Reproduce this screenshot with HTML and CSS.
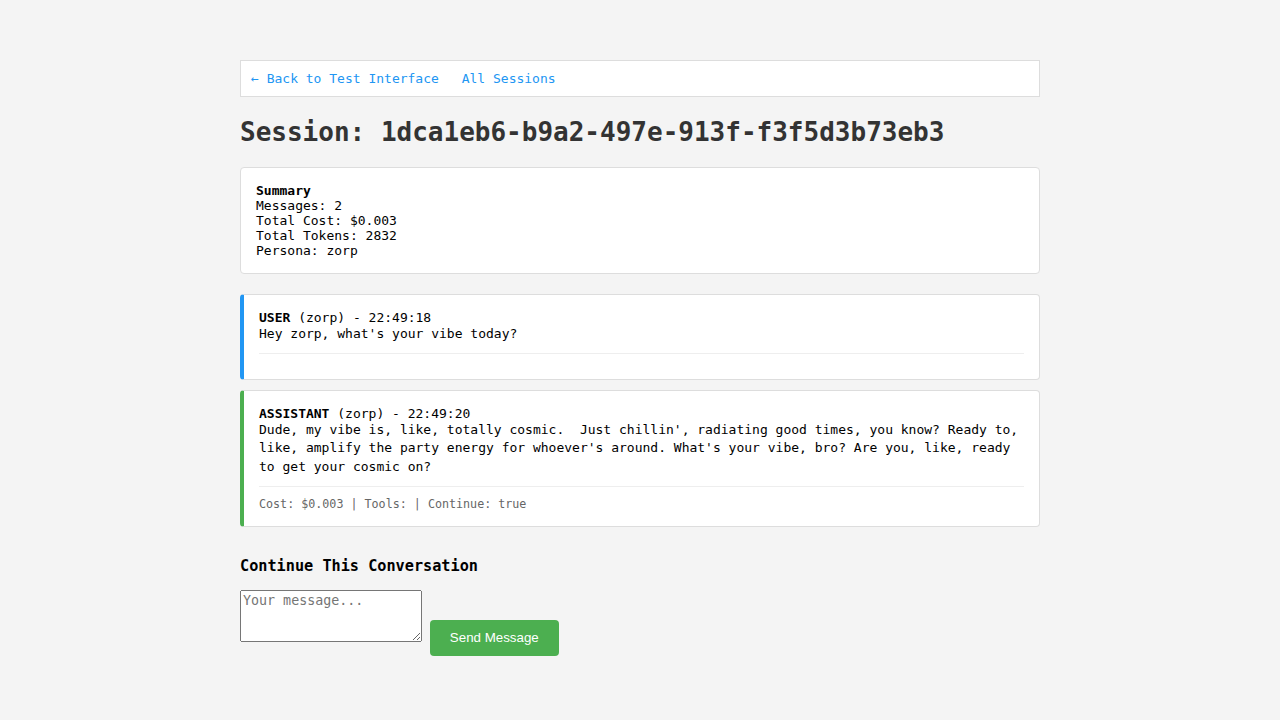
FILE: index.html
```html
<!DOCTYPE html>
<html>
<head>
<meta charset="utf-8">
<title>Session</title>
<link rel="stylesheet" href="styles.css">
</head>
<body>
<div class="container">
  <div class="nav">
    <a href="#">← Back to Test Interface</a>
    <a href="#">All Sessions</a>
  </div>
  <h1 class="title">Session: 1dca1eb6-b9a2-497e-913f-f3f5d3b73eb3</h1>
  <div class="summary">
    <strong>Summary</strong><br>
    Messages: 2<br>
    Total Cost: $0.003<br>
    Total Tokens: 2832<br>
    Persona: zorp
  </div>
  <div class="message user">
    <div class="msg-head"><strong>USER</strong> (zorp) - 22:49:18</div>
    <div class="msg-content">Hey zorp, what's your vibe today?</div>
    <div class="msg-meta"></div>
  </div>
  <div class="message assistant">
    <div class="msg-head"><strong>ASSISTANT</strong> (zorp) - 22:49:20</div>
    <div class="msg-content">Dude, my vibe is, like, totally cosmic.  Just chillin', radiating good times, you know? Ready to, like, amplify the party energy for whoever's around. What's your vibe, bro? Are you, like, ready to get your cosmic on?</div>
    <div class="msg-meta">Cost: $0.003 | Tools:  | Continue: true</div>
  </div>
  <div class="continue">
    <h3 class="continue-title">Continue This Conversation</h3>
    <form class="continue-form">
      <textarea class="msg-input" placeholder="Your message..."></textarea>
      <button type="button" class="send-btn">Send Message</button>
    </form>
  </div>
</div>
</body>
</html>
```
FILE: styles.css
```css
html, body {
  margin: 0;
  padding: 0;
}
body {
  background: #f4f4f4;
  font-family: "DejaVu Sans Mono", monospace;
  font-size: 13px;
  color: #000;
}
.container {
  width: 800px;
  margin: 0 auto;
  padding-top: 60px;
}
.nav {
  background: #fff;
  border: 1px solid #ddd;
  padding: 10px;
  line-height: 15px;
}
.nav a {
  color: #2196F3;
  text-decoration: none;
  margin-right: 15px;
}
.title {
  font-size: 26px;
  font-weight: bold;
  color: #333;
  margin: 20px 0;
  line-height: 30px;
}
.summary {
  background: #fff;
  border: 1px solid #ddd;
  border-radius: 4px;
  padding: 15px;
  line-height: 15px;
  margin-bottom: 20px;
}
.message {
  background: #fff;
  border: 1px solid #ddd;
  border-radius: 4px;
  padding: 15px;
  margin-bottom: 10px;
}
.message.user {
  border-left: 4px solid #2196F3;
}
.message.assistant {
  border-left: 4px solid #4CAF50;
}
.msg-head {
  line-height: 15px;
}
.msg-content {
  white-space: pre-wrap;
  line-height: 1.4;
}
.msg-meta {
  margin-top: 10px;
  padding-top: 10px;
  border-top: 1px solid #eee;
  font-size: 0.9em;
  color: #666;
  line-height: 14px;
}
.continue {
  margin-top: 30px;
}
.continue-title {
  font-size: 1.17em;
  margin: 0 0 15px 0;
  line-height: 18px;
}
.continue-form {
  margin: 0;
}
.msg-input {
  width: 182px;
  height: 52px;
  box-sizing: border-box;
  margin: 0;
  font-family: "DejaVu Sans Mono", monospace;
  font-size: 13.33px;
  vertical-align: baseline;
}
.send-btn {
  background: #4CAF50;
  color: #fff;
  border: none;
  border-radius: 4px;
  padding: 10px 20px;
  margin: 0;
  font-family: "Liberation Sans", Arial, sans-serif;
  font-size: 13.33px;
  line-height: 16px;
  cursor: pointer;
}
```
